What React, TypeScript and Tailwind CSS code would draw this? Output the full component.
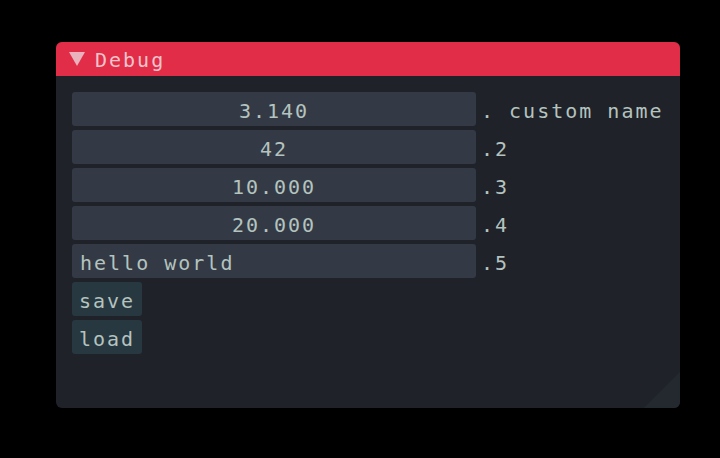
import React from "react"

const font = { fontFamily: '"DejaVu Sans Mono", "Liberation Mono", monospace' }

function Row({ value, label, center = true }: { value: string; label: string; center?: boolean }) {
  return (
    <div className="flex items-center h-[34px]">
      <div
        className={`w-[404px] h-full bg-[#333a45] rounded-[3px] flex items-center pt-[3px] ${
          center ? "justify-center" : "justify-start pl-[8px]"
        }`}
      >
        <span className="whitespace-pre">{value}</span>
      </div>
      <span className="ml-[5px] pt-[3px] whitespace-pre">{label}</span>
    </div>
  )
}

function Button({ text }: { text: string }) {
  return (
    <div className="w-[70px] h-[34px] bg-[#283840] rounded-[3px] flex items-center justify-center pt-[3px]">
      <span>{text}</span>
    </div>
  )
}

export default function App() {
  const rows = [
    { value: "3.140", label: ". custom name" },
    { value: "42", label: ".2" },
    { value: "10.000", label: ".3" },
    { value: "20.000", label: ".4" },
  ]

  return (
    <div className="w-[720px] h-[458px] bg-black pt-[42px] pl-[56px]" style={font}>
      <div className="relative w-[624px] h-[366px] bg-[#1f2229] rounded-[6px] overflow-hidden text-[20px] tracking-[2px] text-[#b4c3bf]">
        <div className="h-[34px] bg-[#e12d48] flex items-center pl-[12px] pt-[2px] text-[#f2c4cc]">
          <svg width="18" height="16" viewBox="0 0 18 16" className="mr-[9px] mt-[-3px]">
            <polygon points="1,1 17,1 9,15" fill="#eab2bc" />
          </svg>
          <span>Debug</span>
        </div>
        <div className="flex flex-col gap-[4px] pt-[16px] pl-[16px]">
          {rows.map((r) => (
            <Row key={r.label} value={r.value} label={r.label} />
          ))}
          <Row value="hello world" label=".5" center={false} />
          <Button text="save" />
          <Button text="load" />
        </div>
        <svg className="absolute right-0 bottom-0" width="36" height="36" viewBox="0 0 36 36">
          <polygon points="36,0 36,36 0,36" fill="#242930" />
        </svg>
      </div>
    </div>
  )
}
